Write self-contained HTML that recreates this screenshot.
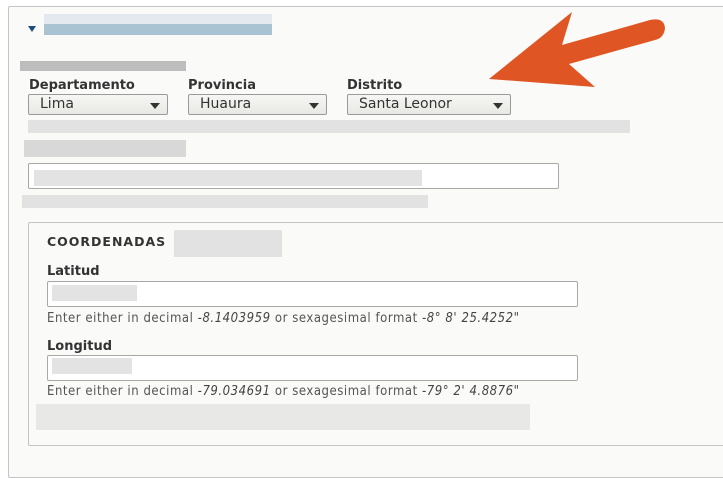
<!DOCTYPE html>
<html><head><style>
body{margin:0;width:723px;height:465px;background:#fff;position:relative;overflow:hidden;font-family:"DejaVu Sans","Liberation Sans",sans-serif;}
.a{position:absolute}
.outer{left:8px;top:6px;width:730px;height:470px;border:1px solid #c4c4c4;background:#fafaf8;border-radius:2px}
.lbl{font-size:13px;font-weight:bold;color:#333}
.sel{height:21px;border:1px solid #9a9a9a;border-radius:2px;background:linear-gradient(#f6f6f4,#e8e8e4);font-size:14px;color:#333;line-height:19px;padding-left:11px;box-sizing:border-box}
.sel:after{content:"";position:absolute;right:7px;top:8px;border-left:5px solid transparent;border-right:5px solid transparent;border-top:6px solid #333}
.blur{background:#dcdcdc;opacity:.8}
.inp{border:1px solid #a8a8a8;background:#fff;border-radius:2px;box-sizing:border-box}
.help{font-family:"DejaVu Sans Condensed","DejaVu Sans",sans-serif;font-stretch:condensed;font-size:13px;letter-spacing:0.55px;color:#555}
.help i{color:#444}
</style></head><body>
<div class="a outer"></div>
<div class="a" style="left:28px;top:26px;border-left:4px solid transparent;border-right:4px solid transparent;border-top:6px solid #1a4f7a"></div>
<div class="a" style="left:44px;top:14px;width:228px;height:10px;background:#e3e9ee"></div>
<div class="a" style="left:44px;top:24px;width:228px;height:11px;background:#aac3d3"></div>
<div class="a" style="left:20px;top:61px;width:166px;height:10px;background:#bdbdbd"></div>
<div class="a lbl" style="left:29px;top:78px">Departamento</div>
<div class="a lbl" style="left:188px;top:78px">Provincia</div>
<div class="a lbl" style="left:347px;top:78px">Distrito</div>
<div class="a sel" style="left:28px;top:94px;width:140px">Lima</div>
<div class="a sel" style="left:188px;top:94px;width:139px">Huaura</div>
<div class="a sel" style="left:347px;top:94px;width:164px">Santa Leonor</div>
<div class="a blur" style="left:28px;top:120px;width:602px;height:13px"></div>
<div class="a blur" style="left:24px;top:140px;width:162px;height:17px;background:#cfcfcf"></div>
<div class="a inp" style="left:28px;top:163px;width:531px;height:26px"></div>
<div class="a blur" style="left:34px;top:170px;width:388px;height:16px"></div>
<div class="a blur" style="left:22px;top:195px;width:406px;height:13px"></div>
<div class="a" style="left:28px;top:222px;width:720px;height:222px;border:1px solid #c4c4c4;border-radius:2px"></div>
<div class="a lbl" style="left:47px;top:234px;font-size:12.5px;letter-spacing:1px">COORDENADAS</div>
<div class="a blur" style="left:174px;top:230px;width:108px;height:27px"></div>
<div class="a lbl" style="left:47px;top:264px">Latitud</div>
<div class="a inp" style="left:47px;top:281px;width:531px;height:26px"></div>
<div class="a blur" style="left:52px;top:285px;width:85px;height:16px"></div>
<div class="a help" style="left:47px;top:311px">Enter either in decimal <i>-8.1403959</i> or sexagesimal format <i>-8° 8' 25.4252"</i></div>
<div class="a lbl" style="left:47px;top:339px">Longitud</div>
<div class="a inp" style="left:47px;top:355px;width:531px;height:26px"></div>
<div class="a blur" style="left:52px;top:358px;width:80px;height:16px"></div>
<div class="a help" style="left:47px;top:384px">Enter either in decimal <i>-79.034691</i> or sexagesimal format <i>-79° 2' 4.8876"</i></div>
<div class="a blur" style="left:36px;top:404px;width:494px;height:26px;opacity:.6"></div>
<svg class="a" style="left:0;top:0" width="723" height="465">
<path d="M489,79 L572,12 L562,45 L650,20 Q664,17 665,28 Q664,38 655,40 L569,64 L595,87 Z" fill="#e05524"/>
</svg>
</body></html>
